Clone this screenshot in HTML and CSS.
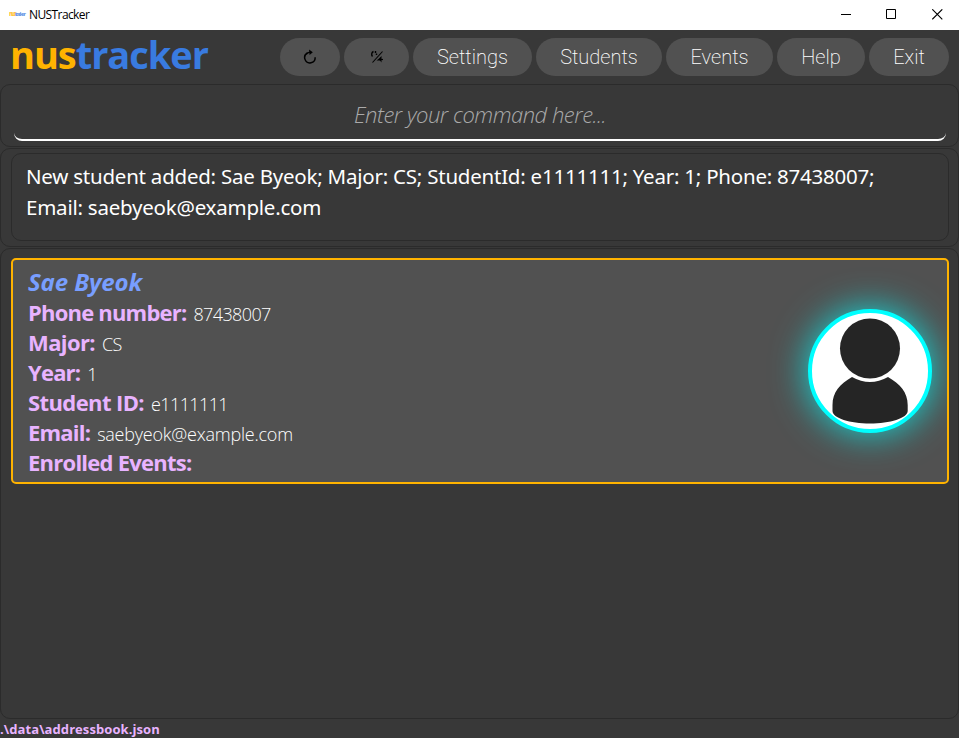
FILE: index.html
```html
<!DOCTYPE html>
<html lang="en">
<head>
<meta charset="utf-8">
<title>NUSTracker</title>
<link rel="stylesheet" href="styles.css">
</head>
<body>
<div class="window">
  <header class="titlebar">
    <span class="app-icon"><b>nus</b>tracker</span>
    <span class="app-title">NUSTracker</span>
    <div class="controls">
      <svg width="11" height="11" viewBox="0 0 11 11" shape-rendering="crispEdges"><path d="M0 5h10v1H0z"/></svg>
      <svg width="11" height="11" viewBox="0 0 11 11"><path d="M.5.5h9v9h-9z" fill="none" stroke="#000"/></svg>
      <svg width="11" height="11" viewBox="0 0 11 11"><path d="M.3.3l10 10M10.3.3l-10 10" fill="none" stroke="#000" stroke-width="1.1"/></svg>
    </div>
  </header>
  <nav class="toolbar">
    <div class="logo"><span class="nus">nus</span>tracker</div>
    <div class="buttons">
      <button class="btn refresh" aria-label="Refresh"><svg width="14" height="16" viewBox="0 0 14 16"><path d="M4.600 4A5.200 5.200 0 1 0 12.100 8.200" fill="none" stroke="#000" stroke-width="1.5"/><path d="M6 .6l3.800 2.700L6.600 6z"/><path d="M3.500 4.300L7 3.200" stroke="#000" stroke-width="1.4"/></svg></button>
      <button class="btn theme" aria-label="Toggle theme"><svg width="14" height="14" viewBox="0 0 14 14"><path d="M2.500 12.500L12.500 1.500" stroke="#000" stroke-width="1.1"/><path d="M3.500 1.500C1.400 2.300 1.200 5 2.500 6.500M5.500 1v2M6.500 3.500v1.500" fill="none" stroke="#000" stroke-width="1.4"/><path d="M11.500 6v6.500L10 10.500H6.500L8.500 9z"/><path d="M9 9.500h4" stroke="#000" stroke-width="1.2"/></svg></button>
      <button class="btn settings">Settings</button>
      <button class="btn students">Students</button>
      <button class="btn events">Events</button>
      <button class="btn help">Help</button>
      <button class="btn exit">Exit</button>
    </div>
  </nav>
  <section class="pane command"><div class="field"><span>Enter your command here...</span></div></section>
  <section class="pane result">
    <div class="message"><div class="line1">New student added: Sae Byeok; Major: CS; StudentId: e1111111; Year: 1; Phone: 87438007;</div><div class="line2">Email: saebyeok@example.com</div></div>
  </section>
  <section class="pane list">
    <article class="card">
      <div class="details">
        <div class="row name"><span>Sae Byeok</span></div>
        <div class="row"><b class="k-phone">Phone number:</b><span class="v-phone">87438007</span></div>
        <div class="row"><b class="k-major">Major:</b><span class="v-major">CS</span></div>
        <div class="row"><b class="k-year">Year:</b><span>1</span></div>
        <div class="row"><b class="k-id">Student ID:</b><span class="v-id">e1111111</span></div>
        <div class="row"><b class="k-email">Email:</b><span class="v-email">saebyeok@example.com</span></div>
        <div class="row"><b class="k-events">Enrolled Events:</b></div>
      </div>
      <div class="avatar"><svg width="116" height="116" viewBox="0 0 116 116"><g fill="#252525"><circle cx="58" cy="35.500" r="30"/><path d="M40 64Q58 74 76 64C88 71 95.700 79 95.700 92V98C95.700 105 78 110.500 58 110.500S20.500 105 20.500 98V92C20.500 79 28 71 40 64Z"/></g></svg></div>
    </article>
  </section>
  <footer class="status"><span>.\data\addressbook.json</span></footer>
</div>
</body>
</html>
```
FILE: styles.css
```css
* { box-sizing: border-box; }
body { margin: 0; background: #383838; font-family: "Open Sans", sans-serif; }
.window { width: 959px; height: 738px; display: flex; flex-direction: column; overflow: hidden; }
.titlebar { height: 30px; flex: none; background: #fff; display: flex; align-items: center; padding: 0 16px 2px 9px; color: #000; }
.app-icon { width: 20px; font: 700 6px "Open Sans", sans-serif; letter-spacing: -1.800px; color: #397be0; white-space: nowrap; opacity: .75; }
.app-icon b { color: #ffb300; }
.app-title { font: 12px/16px "Open Sans", sans-serif; letter-spacing: -.6px; padding-top: 2px; }
.controls { margin-left: auto; display: flex; gap: 34px; padding-right: 1px; }
.controls svg { display: block; }
.controls svg:last-child { margin-left: 1px; margin-right: -1px; }
.toolbar { height: 54px; flex: none; display: flex; justify-content: space-between; padding: 8px 10px 8px 10px; }
.logo { font: 700 38px/38px "Open Sans", sans-serif; letter-spacing: -1.050px; color: #397be0; margin-top: -3px; white-space: nowrap; }
.nus { color: #ffb300; }
.buttons { display: flex; gap: 4px; }
.btn { height: 38px; border: 0; border-radius: 19px; padding: 0; background: #515151; color: #fff; font: 200 20px/38px Roboto, sans-serif; display: flex; justify-content: center; align-items: center; white-space: nowrap; }
.refresh { width: 60px; }
.theme { width: 65px; }
.settings { width: 119px; }
.students { width: 126px; }
.events { width: 107px; }
.help { width: 88px; }
.exit { width: 80px; }
.pane { border: 1px solid #2b2b2b; border-radius: 10px; flex: none; background: #383838; }
.command { height: 63px; padding: 10px 12px 0 13px; }
.field { height: 46px; border-bottom: 2px solid #fff; border-radius: 8px; text-align: center; color: #aaa; font: italic 300 22px/38px "Open Sans", sans-serif; letter-spacing: -.48px; white-space: nowrap; }
.result { height: 99px; margin-top: 1px; padding: 4px 9px 4px 10px; }
.message { height: 88px; border: 1px solid #2b2b2b; border-radius: 10px; padding: 7px 14px; color: #fff; font: 400 20.500px/31px "Noto Sans", sans-serif; letter-spacing: -.23px; white-space: nowrap; }
.list { flex: 1; margin-top: 1px; padding: 9px 9px 0 10px; }
.card { height: 226px; border: 2px solid #ffb300; border-radius: 5px; background: #515151; display: flex; align-items: center; justify-content: space-between; padding: 0 15px; overflow: hidden; }
.details { align-self: flex-start; padding-top: 7px; }
.row { height: 30px; display: flex; align-items: baseline; white-space: nowrap; color: #fff; font: 350 18px/28px "Open Sans", sans-serif; letter-spacing: -.6px; gap: 7px; }
.row b { font: 700 22px/30px "Open Sans", sans-serif; color: #e8b3ff; letter-spacing: -.8px; }
.row .k-major, .row .k-id { letter-spacing: -.6px; }
.row .k-events { letter-spacing: -.75px; }
.row .v-email { letter-spacing: -.22px; }
.name span { font: italic 700 24px/30px "Open Sans", sans-serif; letter-spacing: -.1px; color: #789eff; }
.avatar { width: 124px; height: 124px; border: 4px solid #0ff; border-radius: 50%; background: #fff; box-shadow: 0 0 36px rgba(0,255,255,.8); flex: none; margin-top: -1px; }
.avatar svg { display: block; }
.status { height: 19px; flex: none; color: #e8b3ff; font: 700 13px/20px "Open Sans", sans-serif; letter-spacing: .08px; }
```
